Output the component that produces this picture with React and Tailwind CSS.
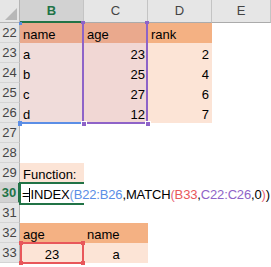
const salmon = "bg-[#eaa98d]";
const orange = "bg-[#f4b183]";
const pale = "bg-[#fce4d6]";
const rose = "bg-[#f0dcda]";
const rose2 = "bg-[#f1d7d4]";

const rows = [
  { n: 22, cells: [{ t: "name", bg: salmon }, { t: "age", bg: salmon }, { t: "rank", bg: orange }] },
  { n: 23, cells: [{ t: "a", bg: rose }, { t: "23", bg: rose2, r: true }, { t: "2", bg: pale, r: true }] },
  { n: 24, cells: [{ t: "b", bg: rose }, { t: "25", bg: rose2, r: true }, { t: "4", bg: pale, r: true }] },
  { n: 25, cells: [{ t: "c", bg: rose }, { t: "27", bg: rose2, r: true }, { t: "6", bg: pale, r: true }] },
  { n: 26, cells: [{ t: "d", bg: rose }, { t: "12", bg: rose2, r: true }, { t: "7", bg: pale, r: true }] },
  { n: 27, cells: [] },
  { n: 28, cells: [] },
  { n: 29, cells: [{ t: "Function:", bg: pale }] },
  { n: 30, cells: [], formula: true },
  { n: 31, cells: [] },
  { n: 32, cells: [{ t: "age", bg: orange }, { t: "name", bg: orange }] },
  { n: 33, cells: [{ t: "23", bg: pale, c: true }, { t: "a", bg: pale, c: true }] },
];

function Cell({ cell }) {
  if (!cell) return <div className="h-[20px]" />;
  return (
    <div
      className={`h-[20px] px-[3px] flex items-end pb-[2px] leading-none ${cell.bg} ${
        cell.r ? "justify-end" : cell.c ? "justify-center" : ""
      }`}
    >
      {cell.t}
    </div>
  );
}

function Formula() {
  return (
    <div className="h-[20px] col-span-4 flex items-end pb-[2px] pl-[2px] leading-none whitespace-nowrap tracking-[-0.15px]">
      <span>=</span>
      <span className="w-px h-[14px] mb-[-1px] bg-black" />
      <span>INDEX</span>
      <span className="text-[#6f9be0]">(</span>
      <span className="text-[#5b8ee6]">B22:B26</span>
      <span>,MATCH</span>
      <span className="text-[#e8667a]">(</span>
      <span className="text-[#e8575a]">B33</span>
      <span>,</span>
      <span className="text-[#8e63c8]">C22:C26</span>
      <span>,0</span>
      <span className="text-[#e8667a]">)</span>
      <span>)</span>
    </div>
  );
}

function Handle({ className }) {
  return <div className={`absolute ${className}`} />;
}

export default function App() {
  return (
    <div className="relative w-[271px] h-[267px] overflow-hidden bg-white text-[13px] text-black font-['Liberation_Sans',Arial,sans-serif]">
      <div className="grid grid-cols-[20px_64px_64px_64px_1fr] grid-rows-[23px]">
        {/* corner + column headers */}
        <div className="relative bg-[#e6e6e6] border-r border-b border-[#b5b5b5]">
          <div className="absolute right-[2px] bottom-[2px] w-0 h-0 border-l-[12px] border-l-transparent border-b-[12px] border-b-[#b8b8b8]" />
        </div>
        <div className="bg-[#d2d2d2] border-b-2 border-[#217346] border-r border-r-[#c4c4c4] flex items-center justify-center font-bold text-[#217346]">
          B
        </div>
        {["C", "D", "E"].map((l) => (
          <div
            key={l}
            className="bg-[#e6e6e6] border-b border-r border-[#c4c4c4] border-b-[#ababab] flex items-center justify-center text-[#444]"
          >
            {l}
          </div>
        ))}

        {rows.map((row) => (
          <div key={row.n} className="contents">
            <div
              className={`h-[20px] border-b flex items-center justify-center leading-none ${
                row.n === 30
                  ? "bg-[#d2d2d2] border-r-2 border-r-[#217346] border-b-[#c4c4c4] font-bold text-[#217346]"
                  : "bg-[#e6e6e6] border-r border-r-[#b5b5b5] border-b-[#d4d4d4] text-[#444]"
              }`}
            >
              {row.n}
            </div>
            {row.formula ? (
              <Formula />
            ) : (
              [0, 1, 2, 3].map((i) => <Cell key={i} cell={row.cells[i]} />)
            )}
          </div>
        ))}
      </div>

      {/* B22:B26 blue range */}
      <div className="absolute left-[20px] top-[122px] w-[63px] h-[2px] bg-[#5b8ee6]" />
      <Handle className="left-[19px] top-[22px] w-[3px] h-[3px] bg-[#5b8ee6]" />
      <Handle className="left-[18px] top-[121px] w-[4px] h-[5px] bg-[#5b8ee6]" />

      {/* C22:C26 purple range */}
      <div className="absolute left-[82px] top-[23px] w-[66px] h-[101px] border-2 border-t-0 border-[#8e63c8]" />
      <Handle className="left-[81px] top-[21px] w-[4px] h-[3px] bg-[#8e63c8]" />
      <Handle className="left-[145px] top-[21px] w-[4px] h-[3px] bg-[#8e63c8]" />
      <Handle className="left-[81px] top-[121px] bg-[#8e63c8] border border-white w-[6px] h-[6px]" />
      <Handle className="left-[145px] top-[121px] bg-[#8e63c8] border border-white w-[6px] h-[6px]" />

      {/* B30 active cell */}
      <div className="absolute left-[19px] top-[182px] w-[65px] h-[23px] border-2 border-r-0 border-[#217346]" />

      {/* B33 red range */}
      <div className="absolute left-[20px] top-[242px] w-[64px] h-[22px] border-2 border-[#e8575a]" />
      <Handle className="left-[19px] top-[241px] w-[4px] h-[4px] bg-[#e8575a]" />
      <Handle className="left-[81px] top-[241px] w-[4px] h-[4px] bg-[#e8575a]" />
      <Handle className="left-[19px] top-[261px] w-[4px] h-[4px] bg-[#e8575a]" />
      <Handle className="left-[81px] top-[261px] w-[4px] h-[4px] bg-[#e8575a]" />
    </div>
  );
}
